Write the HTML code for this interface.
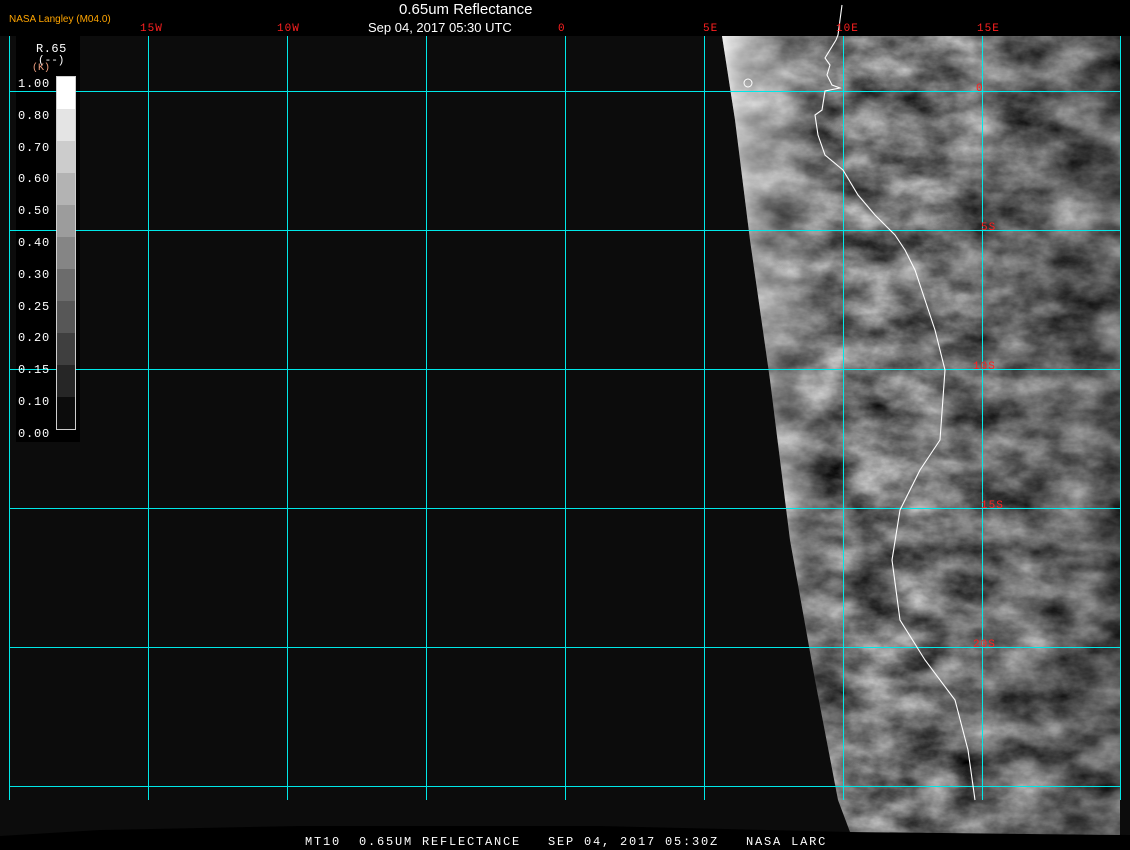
<!DOCTYPE html>
<html><head><meta charset="utf-8"><style>
html,body{margin:0;padding:0;background:#000;width:1130px;height:850px;overflow:hidden;position:relative;font-family:"Liberation Sans",sans-serif}
.t{position:absolute;white-space:pre}
.m{font-family:"Liberation Mono",monospace}
.red{color:#ff2020;font-size:11px;font-family:"Liberation Mono",monospace;letter-spacing:1px}
</style></head><body>
<svg width="1130" height="850" style="position:absolute;left:0;top:0">
<defs>
<filter id="tx2" x="0" y="0" width="100%" height="100%" color-interpolation-filters="sRGB">
<feTurbulence type="fractalNoise" baseFrequency="0.02 0.035" numOctaves="5" seed="3" result="n"/>
<feColorMatrix in="n" type="matrix" values="1.0 0 0 0 -0.06  1.0 0 0 0 -0.06  1.0 0 0 0 -0.06  0 0 0 0 1"/>
</filter>
<clipPath id="sat"><path d="M722,36 L1120,36 L1120,835 L850,832 L838,800 L815,680 L790,540 L770,380 L750,240 L735,120 Z"/></clipPath>
<linearGradient id="lim" x1="0" x2="1" y1="0" y2="0">
<stop offset="0" stop-color="#fff" stop-opacity="0.9"/><stop offset="0.08" stop-color="#ddd" stop-opacity="0.5"/><stop offset="0.3" stop-color="#999" stop-opacity="0"/></linearGradient>
<linearGradient id="dk" x1="0" x2="1" y1="0" y2="0">
<stop offset="0.5" stop-color="#000" stop-opacity="0"/><stop offset="1" stop-color="#000" stop-opacity="0.25"/></linearGradient>
</defs>
<path d="M0,36 L1130,36 L1130,835 L850,832 L600,826 L300,826 L100,830 L0,836 Z" fill="#0c0c0c"/>
<g clip-path="url(#sat)">
<rect x="720" y="36" width="410" height="800" filter="url(#tx2)"/>
<rect x="720" y="36" width="410" height="800" fill="url(#dk)"/>
<rect x="720" y="36" width="400" height="800" fill="url(#lim)"/>
</g>
<rect x="16" y="36" width="64" height="406" fill="#000"/>
<g fill="none" stroke="#00e8e8" stroke-width="1">
<path d="M9.5,36V800M148.5,36V800M287.5,36V800M426.5,36V800M565.5,36V800M704.5,36V800M843.5,36V800M982.5,36V800M1120.5,36V800"/>
<path d="M9,91.5H1120M9,230.5H1120M9,369.5H1120M9,508.5H1120M9,647.5H1120M9,786.5H1120"/>
</g>
<g stroke="#fff" stroke-width="0.8">
<rect x="56.5" y="76.5" width="19" height="353" fill="#0c0c0c"/>
<rect x="57" y="77" width="18" height="32" fill="#fff" stroke="none"/>
<rect x="57" y="109" width="18" height="32" fill="#e4e4e4" stroke="none"/>
<rect x="57" y="141" width="18" height="32" fill="#cccccc" stroke="none"/>
<rect x="57" y="173" width="18" height="32" fill="#b3b3b3" stroke="none"/>
<rect x="57" y="205" width="18" height="32" fill="#9c9c9c" stroke="none"/>
<rect x="57" y="237" width="18" height="32" fill="#858585" stroke="none"/>
<rect x="57" y="269" width="18" height="32" fill="#6c6c6c" stroke="none"/>
<rect x="57" y="301" width="18" height="32" fill="#575757" stroke="none"/>
<rect x="57" y="333" width="18" height="32" fill="#3f3f3f" stroke="none"/>
<rect x="57" y="365" width="18" height="32" fill="#262626" stroke="none"/>
</g>
<path d="M842,5 L838,35 L836,40 L825,58 L830,65 L827,75 L832,85 L840,88 L825,91 L822,110 L815,115 L818,135 L825,155 L843,170 L858,195 L875,215 L895,235 L905,250 L915,270 L935,330 L945,370 L940,440 L920,470 L900,510 L892,560 L900,620 L925,660 L955,700 L968,750 L975,800" fill="none" stroke="#fff" stroke-width="1.1"/>
<ellipse cx="748" cy="83" rx="4" ry="4" fill="none" stroke="#fff" stroke-width="1"/>
</svg>
<div class="t" style="left:9px;top:14px;font-size:10px;color:#ffa500">NASA Langley (M04.0)</div>
<div class="t" style="left:399px;top:1px;font-size:15px;color:#fff">0.65um Reflectance</div>
<div class="t" style="left:368px;top:20px;font-size:13px;color:#fff">Sep 04, 2017 05:30 UTC</div>
<div class="t red" style="left:140px;top:23px">15W</div>
<div class="t red" style="left:277px;top:23px">10W</div>
<div class="t red" style="left:558px;top:23px">0</div>
<div class="t red" style="left:703px;top:23px">5E</div>
<div class="t red" style="left:836px;top:23px">10E</div>
<div class="t red" style="left:977px;top:23px">15E</div>
<div class="t red" style="left:976px;top:83px">0</div>
<div class="t red" style="left:981px;top:222px">5S</div>
<div class="t red" style="left:973px;top:361px">10S</div>
<div class="t red" style="left:981px;top:500px">15S</div>
<div class="t red" style="left:973px;top:639px">20S</div>
<div class="t m" style="left:36px;top:42px;font-size:12px;color:#fff;letter-spacing:0.5px">R.65</div>
<div class="t m" style="left:38px;top:55px;font-size:11px;color:#fff">(--)</div>
<div class="t m" style="left:32px;top:63px;font-size:10px;color:#f0a080">(K)</div>
<div class="t m" style="left:18px;top:69px;font-size:12px;color:#fff;line-height:31.8px;letter-spacing:0.8px">1.00<br>0.80<br>0.70<br>0.60<br>0.50<br>0.40<br>0.30<br>0.25<br>0.20<br>0.15<br>0.10<br>0.00</div>
<div class="t m" style="left:305px;top:835px;font-size:12px;color:#fff;letter-spacing:1.8px">MT10  0.65UM REFLECTANCE   SEP 04, 2017 05:30Z   NASA LARC</div>
</body></html>
